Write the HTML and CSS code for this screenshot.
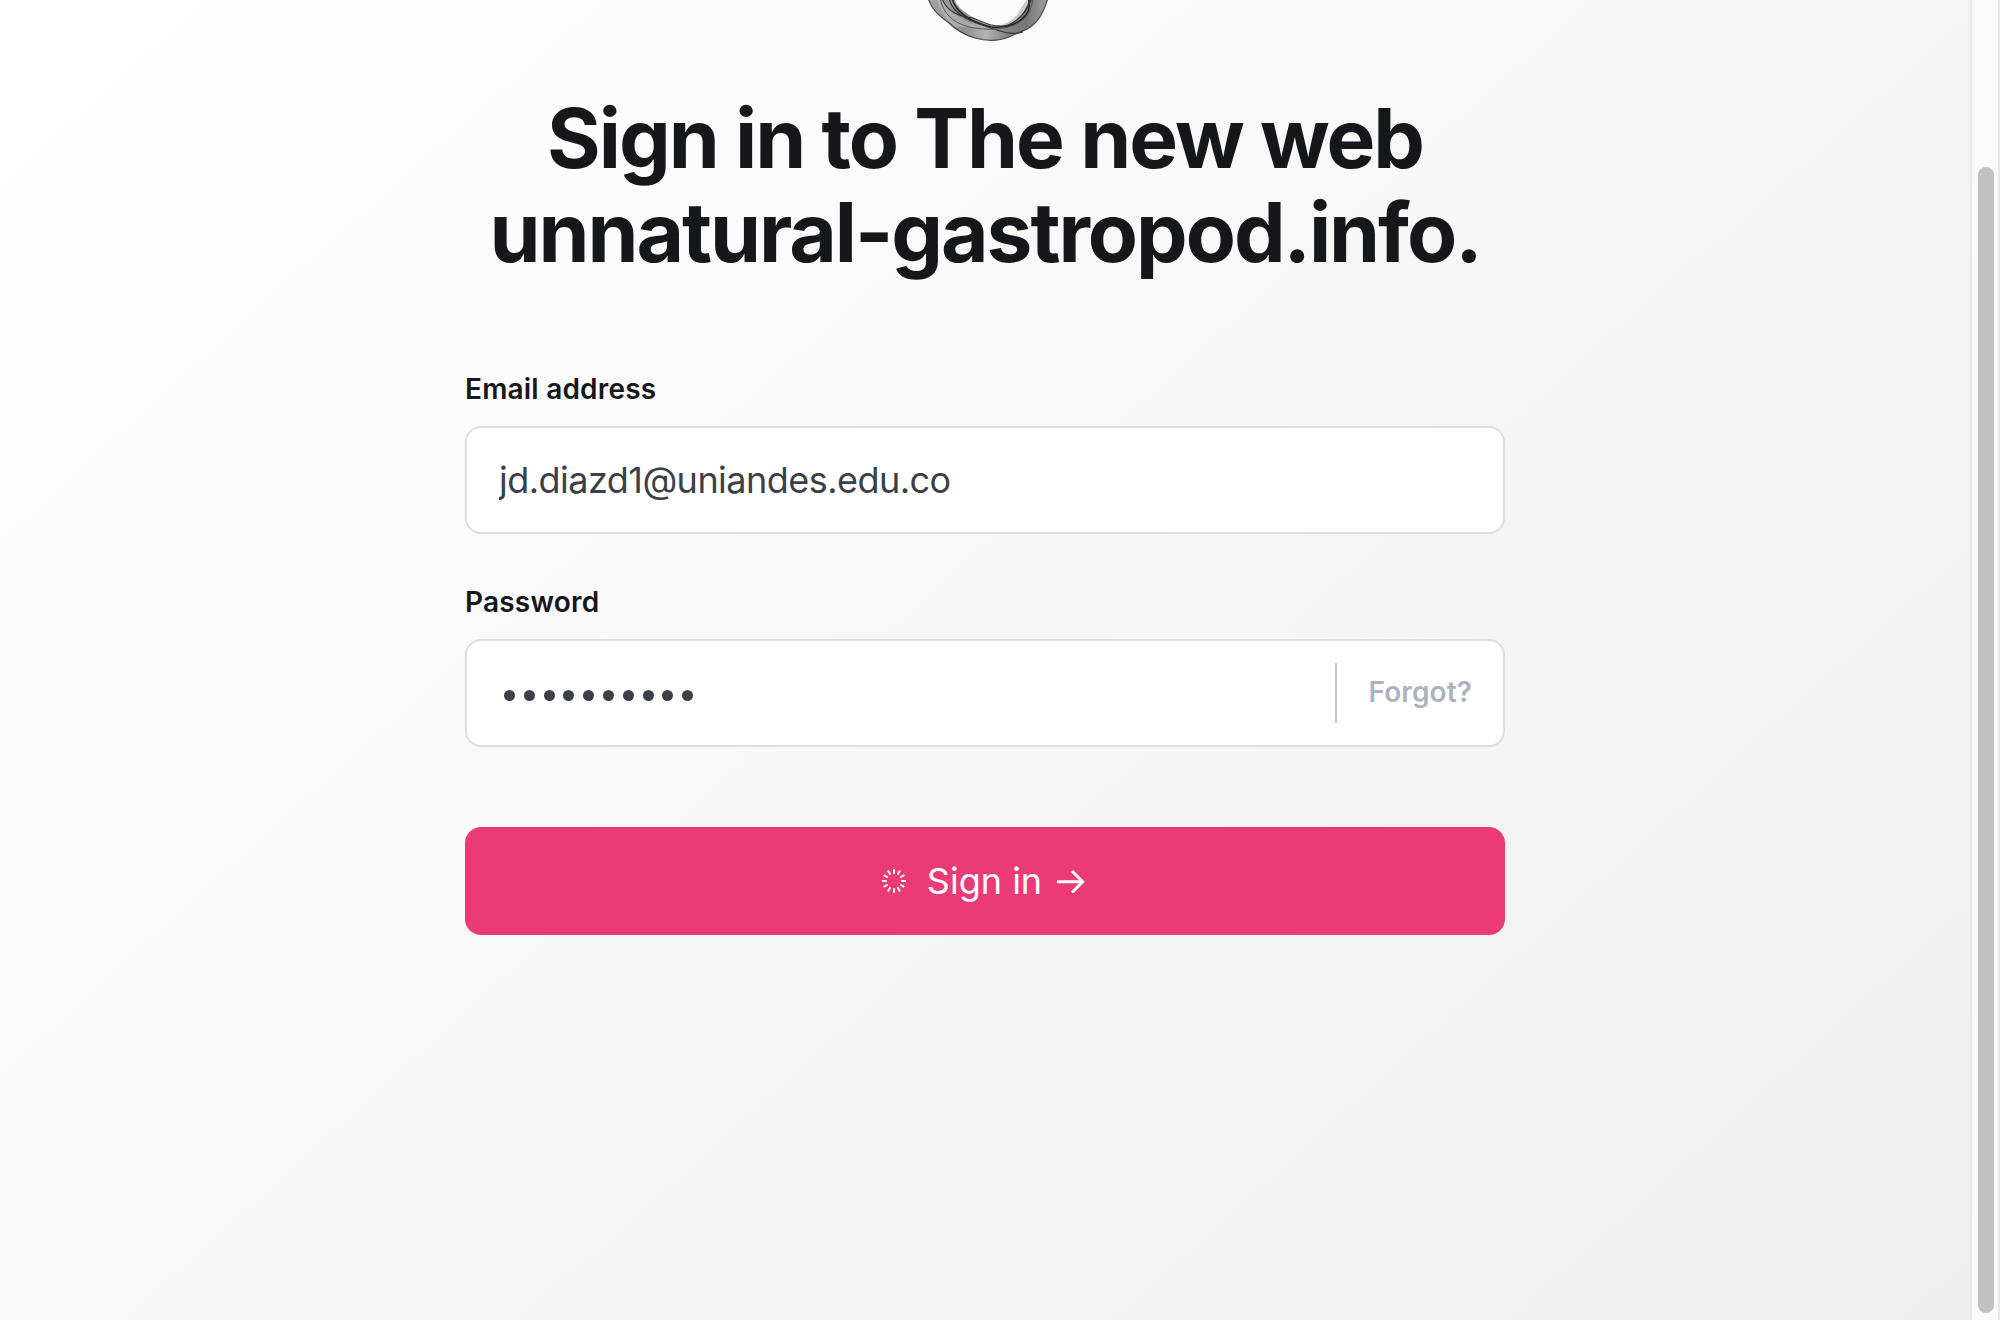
FILE: index.html
```
<!DOCTYPE html>
<html lang="en">
<head>
<meta charset="utf-8">
<title>Sign in</title>
<link rel="stylesheet" href="styles.css">
</head>
<body>
<div class="page">
  <main class="content">
    <svg class="logo" viewBox="0 0 130 46" aria-hidden="true">
      <defs>
        <linearGradient id="ring" x1="0" y1="0" x2="1" y2="0">
          <stop offset="0" stop-color="#a4a4a4"/>
          <stop offset=".3" stop-color="#8e8e8e"/>
          <stop offset=".48" stop-color="#b4b4b4"/>
          <stop offset=".65" stop-color="#858585"/>
          <stop offset=".82" stop-color="#777"/>
          <stop offset="1" stop-color="#a0a0a0"/>
        </linearGradient>
      </defs>
      <path d="M3-2C7 11 16 17 24 23C31 30 40 35 50 38C61 41 74 41 84 37C90 34 94 33 100 30C112 25 119 12 123-2H104C101 11 93 21 80 25C65 29 52 20 43 14C36 10 31 5 29-2Z" fill="url(#ring)"/>
      <path d="M18-2C25 13 38 20 53 27L30 27C22 19 14 12 12-2Z" fill="#c4c4c4" opacity=".5"/>
      <path d="M79 26C92 23 101 13 103-2L96 8C92 17 86 22 76 25Z" fill="#c8c8c8"/>
      <path d="M3-2C7 11 16 17 24 23C31 30 40 35 50 38C61 41 74 41 84 37C90 34 94 33 100 30C112 25 119 12 123-2" fill="none" stroke="#444" stroke-width="1.1"/>
      <path d="M27-2C31 15 51 23 66 27C77 28 91 27 101 15C105 9 105 3 103-2" fill="none" stroke="#222" stroke-width="1.5"/>
      <path d="M24-2C28 18 54 24 75 31C84 34 91 34 98 32M17-2C22 13 37 17 48 18C58 22 66 27 79 26C92 23 101 13 107-2" fill="none" stroke="#333" stroke-width="1.2"/>
      <path d="M15-2C19 19 36 26 50 28C69 31 88 29 99 19C105 13 107 6 108-2" fill="none" stroke="#555" stroke-width="1"/>
    </svg>
    <h1 class="title">Sign in to The new web<br>unnatural-gastropod.info.</h1>
    <form class="form">
      <div class="field">
        <label class="label" for="email">Email address</label>
        <div class="control"><input class="input" id="email" type="text" value="jd.diazd1@uniandes.edu.co"></div>
      </div>
      <div class="field">
        <span class="label">Password</span>
        <div class="control">
          <div class="dots"><i></i><i></i><i></i><i></i><i></i><i></i><i></i><i></i><i></i><i></i></div>
          <a class="forgot">Forgot?</a>
        </div>
      </div>
      <button class="submit" type="button">
        <svg class="spinner" viewBox="-12 -12 24 24" aria-hidden="true">
          <g stroke="#fff" stroke-width="2">
            <path d="M0-12V-7.3M0 12V7.3M-12 0H-7.3M12 0H7.3"/>
            <path d="M0-12V-7.3M0 12V7.3M-12 0H-7.3M12 0H7.3" transform="rotate(30)"/>
            <path d="M0-12V-7.3M0 12V7.3M-12 0H-7.3M12 0H7.3" transform="rotate(60)"/>
          </g>
        </svg>
        <span class="submit-text">Sign in</span>
        <svg class="arrow" viewBox="0 0 28 24" aria-hidden="true"><path d="M0 12.8H25M15 2L25.7 12.8L15 23.6" fill="none" stroke="#fff" stroke-width="2.9"/></svg>
      </button>
    </form>
  </main>
  <div class="scrollbar"><div class="thumb"></div></div>
</div>
</body>
</html>
```
FILE: styles.css
```
* { box-sizing: border-box; }
body { margin: 0; font-family: Inter, sans-serif; color: #15171a; }
.page {
  display: flex;
  height: 1320px;
  overflow: hidden;
  background: linear-gradient(138deg, #fff 3%, #eee 100%);
}
.content { flex: 1; display: flex; flex-direction: column; align-items: center; }
.logo { width: 130px; height: 46px; flex: none; margin-left: 10px; }
.title {
  margin: 46px 0 0;
  font-size: 82px;
  line-height: 94px;
  font-weight: 700;
  letter-spacing: -2.05px;
  text-align: center;
  white-space: nowrap;
}
.form { width: 1040px; margin-top: 92px; }
.field { margin-bottom: 51px; }
.label {
  display: block;
  height: 34px;
  margin-bottom: 20px;
  font-size: 28px;
  line-height: 34px;
  font-weight: 600;
  letter-spacing: .2px;
}
.field + .field { margin-bottom: 80px; }
.control {
  display: flex;
  align-items: center;
  height: 108px;
  padding: 0 31px 0 32px;
  border: 2px solid #dddede;
  border-radius: 16px;
  background: #fff;
}
.input {
  width: 100%;
  padding: 0;
  border: 0;
  outline: 0;
  background: none;
  color: #3b4047;
  font: 400 36px/44px Inter, sans-serif;
  letter-spacing: -.53px;
}
.dots { display: flex; gap: 8.8px; padding: 4px 0 0 5px; flex: 1; }
.dots i { width: 11px; height: 11px; border-radius: 50%; background: #3b4047; }
.forgot {
  height: 60px;
  padding-left: 32px;
  border-left: 2px solid #c4c5c6;
  color: #abb4be;
  font-size: 28px;
  line-height: 58px;
  font-weight: 600;
  letter-spacing: .1px;
}
.submit {
  display: flex;
  align-items: center;
  justify-content: center;
  width: 100%;
  height: 108px;
  padding: 0 3px 0 0;
  border: 0;
  border-radius: 16px;
  background: #eb3b76;
  color: #fff;
  font: 400 36px/44px Inter, sans-serif;
}
.spinner { width: 24px; height: 24px; margin-right: 21px; }
.arrow { width: 28px; height: 24px; margin-left: 15px; }
.scrollbar {
  width: 30px;
  padding: 167px 4px 7px 6px;
  border: solid #e8e8e8;
  border-width: 0 2px;
  background: #fafafa;
}
.thumb { height: 1146px; border-radius: 8px; background: #c1c1c1; }
```
